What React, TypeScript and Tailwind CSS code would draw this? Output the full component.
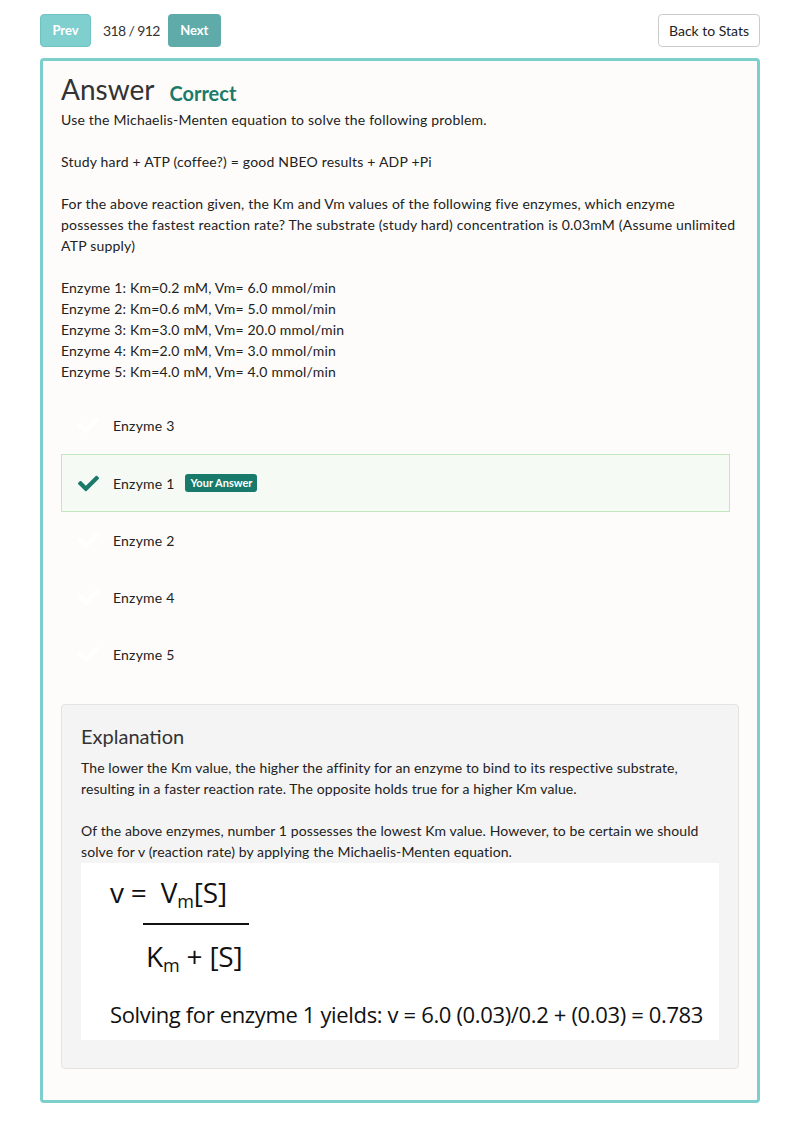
import React from "react";

function Check({ className }: { className: string }) {
  return (
    <svg viewBox="0 0 512 512" className={className} fill="currentColor">
      <path d="M173.898 439.404l-166.4-166.4c-9.997-9.997-9.997-26.206 0-36.204l36.203-36.204c9.997-9.998 26.207-9.998 36.204 0L192 312.69 432.095 72.596c9.997-9.997 26.207-9.997 36.204 0l36.203 36.204c9.997 9.997 9.997 26.206 0 36.204l-294.4 294.401c-9.998 9.997-26.207 9.997-36.204-.001z" />
    </svg>
  );
}

const options = [
  { label: "Enzyme 3", selected: false },
  { label: "Enzyme 1", selected: true },
  { label: "Enzyme 2", selected: false },
  { label: "Enzyme 4", selected: false },
  { label: "Enzyme 5", selected: false },
];

export default function App() {
  return (
    <div
      className="min-h-[1127px] bg-white px-[40px] pt-[14px] text-[#333]"
      style={{ fontFamily: "Lato, 'Open Sans', sans-serif" }}
    >
      <div className="flex items-center justify-between">
        <div className="flex items-center">
          <button className="h-[33px] w-[51px] rounded-[4px] border border-[#6fc3c3] bg-[#80cfcf] text-[13px] font-bold text-white">
            Prev
          </button>
          <span className="ml-[12px] mr-[8px] whitespace-nowrap text-[14px] tracking-[-0.6px] text-[#333]">318 / 912</span>
          <button className="h-[33px] w-[53px] rounded-[4px] bg-[#5fabaa] text-[13px] font-bold text-white">
            Next
          </button>
        </div>
        <button className="h-[33px] w-[102px] rounded-[4px] border border-[#ccc] bg-white text-[14px] text-[#222]">
          Back to Stats
        </button>
      </div>

      <div className="mt-[11px] rounded-[4px] border-[3px] border-[#7dcfcb] bg-[#fdfcfa] pb-[31px] pl-[18px] pr-[18px] pt-[8px]">
        <div className="flex items-end">
          <h1 className="text-[28px] leading-[40px] text-[#333]">Answer</h1>
          <span className="mb-[1px] ml-[15px] text-[20px] font-bold leading-[30px] text-[#1b7a6a]">Correct</span>
        </div>
        <div className="text-[14px] leading-[21px] tracking-[0.2px] text-[#222]">
          <p>Use the Michaelis-Menten equation to solve the following problem.</p>
          <br />
          <p>Study hard + ATP (coffee?) = good NBEO results + ADP +Pi</p>
          <br />
          <p>
            For the above reaction given, the Km and Vm values of the following five enzymes, which enzyme
            <br />
            possesses the fastest reaction rate? The substrate (study hard) concentration is 0.03mM (Assume unlimited
            <br />
            ATP supply)
          </p>
          <br />
          <p>Enzyme 1: Km=0.2 mM, Vm= 6.0 mmol/min</p>
          <p>Enzyme 2: Km=0.6 mM, Vm= 5.0 mmol/min</p>
          <p>Enzyme 3: Km=3.0 mM, Vm= 20.0 mmol/min</p>
          <p>Enzyme 4: Km=2.0 mM, Vm= 3.0 mmol/min</p>
          <p>Enzyme 5: Km=4.0 mM, Vm= 4.0 mmol/min</p>
        </div>

        <div className="mr-[9px] mt-[15px] flex flex-col">
          {options.map((o) => (
            <div
              key={o.label}
              className={
                o.selected
                  ? "flex h-[58px] items-center border border-[#c4e6bf] bg-[#f5fbf4] pl-[16px]"
                  : "flex h-[57px] items-center border border-transparent pl-[16px]"
              }
            >
              <Check className={o.selected ? "h-[21px] w-[21px] text-[#1b7a6a]" : "h-[21px] w-[21px] text-white"} />
              <span className="ml-[14px] text-[14px] tracking-[0.2px] text-[#222]">{o.label}</span>
              {o.selected && (
                <span className="ml-[11px] rounded-[3px] bg-[#177a6b] px-[5px] py-[2px] text-[11px] font-bold leading-[14px] text-white">
                  Your Answer
                </span>
              )}
            </div>
          ))}
        </div>

        <div className="mt-[21px] rounded-[4px] border border-[#e3e3e3] bg-[#f4f4f4] px-[19px] pb-[28px] pt-[17px]">
          <h2 className="text-[20px] leading-[28px] text-[#333]">Explanation</h2>
          <div className="mt-[7px] text-[14px] leading-[21px] tracking-[0.1px] text-[#222]">
            <p>
              The lower the Km value, the higher the affinity for an enzyme to bind to its respective substrate,
              <br />
              resulting in a faster reaction rate. The opposite holds true for a higher Km value.
            </p>
            <br />
            <p>
              Of the above enzymes, number 1 possesses the lowest Km value. However, to be certain we should
              <br />
              solve for v (reaction rate) by applying the Michaelis-Menten equation.
            </p>
          </div>
          <div
            className="mt-[1px] bg-white pb-[11px] pl-[29px] pt-[12px] text-[#111]"
            style={{ fontFamily: "'Open Sans', 'Liberation Sans', sans-serif" }}
          >
            <div className="text-[28px] leading-[34px] tracking-[-0.2px]">
              v = &nbsp;V<sub className="text-[18px]">m</sub>[S]
            </div>
            <div className="ml-[33px] mt-[14px] h-[2px] w-[106px] bg-[#111]" />
            <div className="ml-[36px] mt-[14px] text-[28px] leading-[34px] tracking-[-0.2px]">
              K<sub className="text-[18px]">m</sub> + [S]
            </div>
            <div className="mt-[26px] text-[22px] leading-[30px] tracking-[-0.35px]">
              Solving for enzyme 1 yields: v = 6.0 (0.03)/0.2 + (0.03) = 0.783
            </div>
          </div>
        </div>
      </div>
    </div>
  );
}
